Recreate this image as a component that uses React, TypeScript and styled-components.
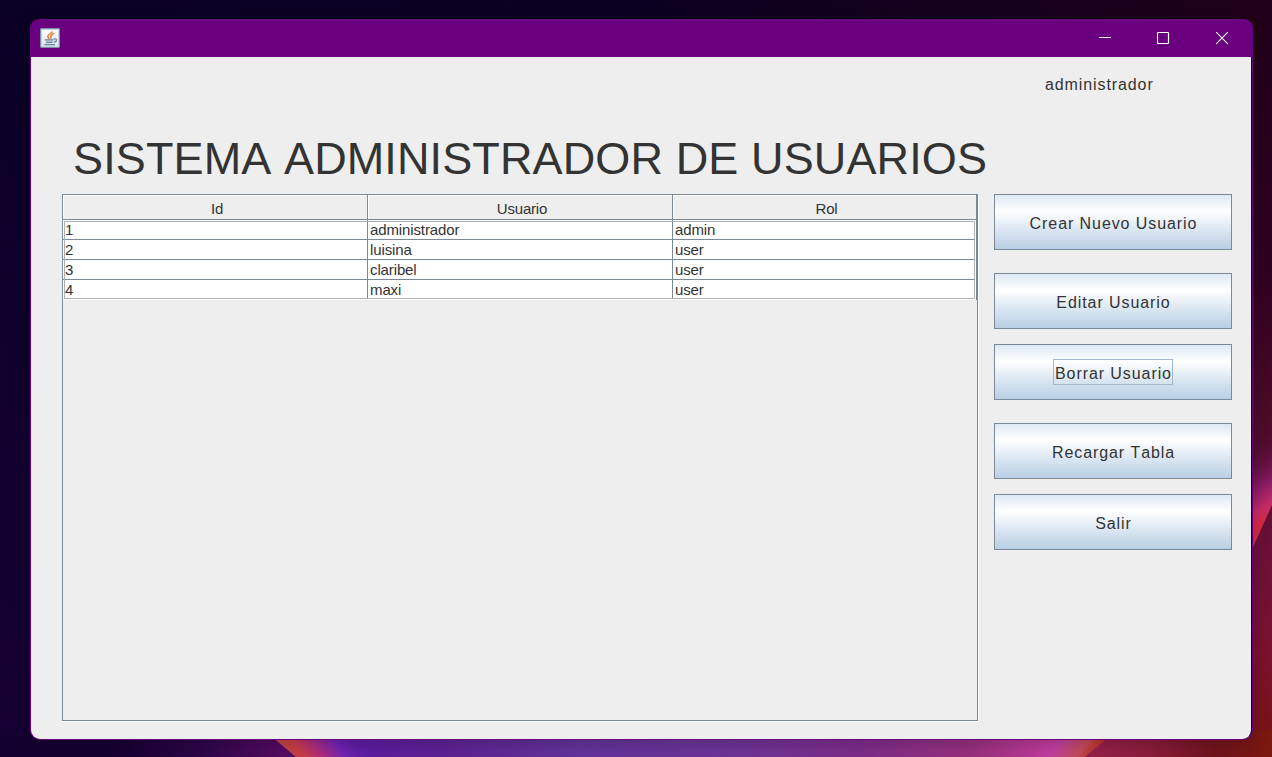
import React from "react";
import styled, { createGlobalStyle } from "styled-components";

const line = "#7a8a99";

const GlobalStyle = createGlobalStyle`
  html, body { margin: 0; padding: 0; overflow: hidden; }
  *, *::before, *::after { box-sizing: border-box; }
`;

const Desktop = styled.main`
  position: relative;
  width: 1272px;
  height: 757px;
  padding: 19px 19px 17px 30px;
  overflow: hidden;
  background: #0d0026;
  font-family: "Liberation Sans", Arial, sans-serif;
  font-kerning: none;
  color: #333;
`;

const Wallpaper = styled.svg`
  position: absolute;
  inset: 0;
`;

const Window = styled.section`
  position: relative;
  display: flex;
  flex-direction: column;
  height: 721px;
  padding: 0 1px 1px 1px;
  border-radius: 9px 9px 10px 10px;
  background: #6a007f;
  box-shadow: 0 3px 18px rgba(0, 0, 0, 0.2);
`;

const TitleBar = styled.header`
  display: flex;
  align-items: center;
  justify-content: space-between;
  height: 38px;
  padding: 0 23px 0 9px;
`;

const Controls = styled.div`
  display: flex;
  align-items: center;
  gap: 44px;
`;

const ControlIcon = styled.svg`
  display: block;
  width: 14px;
  height: 14px;
  fill: none;
  stroke: #fff;
`;

const Content = styled.div`
  flex: 1;
  display: flex;
  flex-direction: column;
  padding: 18px 19px 0 31px;
  background: #eee;
  border-right: 1px solid #08000c;
  border-radius: 0 0 9px 9px;
`;

const SessionUser = styled.div`
  align-self: flex-end;
  width: 187px;
  height: 20px;
  font-size: 16px;
  line-height: 20px;
  letter-spacing: 0.9px;
`;

const Heading = styled.h1`
  margin: 37px 0 9px 11px;
  height: 53px;
  font-size: 45px;
  font-weight: 400;
  line-height: 53px;
  letter-spacing: 0.12px;
  white-space: nowrap;
`;

const Workspace = styled.div`
  display: flex;
  gap: 16px;
`;

const ScrollPane = styled.div`
  width: 916px;
  height: 527px;
  border: 1px solid ${line};
  box-shadow: 1px 1px 0 #fff;
`;

const TableArea = styled.div`
  width: 914px;
  border-right: 1px solid ${line};
  font-size: 15px;
  letter-spacing: -0.12px;
`;

const Row = styled.div`
  display: grid;
  grid-template-columns: 305px 305px 1fr;
`;

const HeaderCell = styled.div`
  height: 25px;
  padding: 1px 0 0 4px;
  border-right: 1px solid ${line};
  border-bottom: 1px solid ${line};
  box-shadow: inset 1px 1px 0 #fff;
  line-height: 25px;
  letter-spacing: -0.2px;
  text-align: center;
  &:last-child { border-right: 0; }
`;

const Body = styled.div`
  position: relative;
  height: 80px;
  padding-right: 1px;
  background: #fff;
  &::after {
    content: "";
    position: absolute;
    inset: 1px 1px 1px 1px;
    border: 1px solid #b0b0b0;
  }
`;

const Cell = styled.div<{ $last: boolean }>`
  height: ${({ $last }) => ($last ? 19 : 20)}px;
  padding-left: 2px;
  border-right: 1px solid ${line};
  border-bottom: ${({ $last }) => ($last ? 0 : 1)}px solid ${line};
  line-height: 20px;
  &:last-child { border-right: 0; }
`;

const Actions = styled.nav`
  display: flex;
  flex-direction: column;
  width: 238px;
`;

const ActionButton = styled.button<{ $gap: number }>`
  display: flex;
  align-items: center;
  justify-content: center;
  height: 56px;
  margin: 0 0 ${({ $gap }) => $gap}px;
  padding: 0;
  border: 1px solid ${line};
  background: linear-gradient(#dde8f3 0%, #fff 30%, #dde8f3 62%, #b8cfe5 100%);
  color: #333;
  font: 16px/24px "Liberation Sans", Arial, sans-serif;
  font-kerning: none;
  letter-spacing: 0.92px;
`;

const ButtonLabel = styled.span<{ $focused?: boolean }>`
  height: 26px;
  padding: 2px 0 0 1px;
  border: 1px solid ${({ $focused }) => ($focused ? "#a3b8cc" : "transparent")};
`;

const users = [
  ["1", "administrador", "admin"],
  ["2", "luisina", "user"],
  ["3", "claribel", "user"],
  ["4", "maxi", "user"],
];

const actions = [
  { label: "Crear Nuevo Usuario", gap: 23 },
  { label: "Editar Usuario", gap: 15 },
  { label: "Borrar Usuario", gap: 23, focused: true },
  { label: "Recargar Tabla", gap: 15 },
  { label: "Salir", gap: 0 },
];

function Background() {
  return (
    <Wallpaper width="1272" height="757" viewBox="0 0 1272 757">
      <defs>
        <linearGradient id="top" x1="0" x2="1" y1="0" y2="0">
          <stop offset="0" stopColor="#0b0026" />
          <stop offset=".5" stopColor="#0c0022" />
          <stop offset=".85" stopColor="#18001c" />
          <stop offset="1" stopColor="#200018" />
        </linearGradient>
        <linearGradient id="left" x1="0" x2="0" y1="0" y2="1">
          <stop offset="0" stopColor="#0b0026" />
          <stop offset="1" stopColor="#160033" />
        </linearGradient>
        <linearGradient id="right" x1="0" x2="0" y1="0" y2="1">
          <stop offset="0" stopColor="#200018" />
          <stop offset=".35" stopColor="#2e0020" />
          <stop offset=".53" stopColor="#480a25" />
          <stop offset=".72" stopColor="#6b1038" />
          <stop offset=".86" stopColor="#7b1230" />
          <stop offset="1" stopColor="#781410" />
        </linearGradient>
        <linearGradient id="flare" gradientUnits="userSpaceOnUse" x1="1228" y1="453" x2="1264" y2="520">
          <stop offset="0" stopColor="#480a35" stopOpacity="0" />
          <stop offset=".6" stopColor="#8a1c64" />
          <stop offset=".85" stopColor="#c42c68" />
          <stop offset="1" stopColor="#d52a48" />
        </linearGradient>
        <linearGradient id="bottom" gradientUnits="userSpaceOnUse" x1="0" y1="0" x2="1272" y2="0">
          <stop offset="0" stopColor="#14002f" />
          <stop offset=".09" stopColor="#15002f" />
          <stop offset=".16" stopColor="#2d0648" />
          <stop offset=".225" stopColor="#560b62" />
          <stop offset="1" stopColor="#560b62" />
        </linearGradient>
        <linearGradient id="glow" gradientUnits="userSpaceOnUse" x1="276" y1="748" x2="1105" y2="748">
          <stop offset=".1" stopColor="#5b1ca0" />
          <stop offset=".2" stopColor="#5c2193" />
          <stop offset=".36" stopColor="#62329a" />
          <stop offset=".55" stopColor="#6c3496" />
          <stop offset=".71" stopColor="#7c2c88" />
          <stop offset=".84" stopColor="#982f7c" />
          <stop offset=".93" stopColor="#bd3a99" />
        </linearGradient>
        <linearGradient id="leftEdge" gradientUnits="userSpaceOnUse" x1="281" y1="750" x2="338" y2="705">
          <stop offset="0" stopColor="#c94440" />
          <stop offset=".22" stopColor="#c43b48" />
          <stop offset=".36" stopColor="#b42c72" />
          <stop offset=".65" stopColor="#7024b4" />
          <stop offset="1" stopColor="#5b1ca0" stopOpacity="0" />
        </linearGradient>
        <linearGradient id="rightEdge" gradientUnits="userSpaceOnUse" x1="1055" y1="724" x2="1094" y2="752">
          <stop offset="0" stopColor="#bd3a99" stopOpacity="0" />
          <stop offset=".3" stopColor="#c03fa0" />
          <stop offset=".75" stopColor="#c14a58" />
          <stop offset="1" stopColor="#bd3029" />
        </linearGradient>
        <linearGradient id="ember" gradientUnits="userSpaceOnUse" x1="1080" y1="0" x2="1272" y2="0">
          <stop offset="0" stopColor="#96214d" />
          <stop offset=".35" stopColor="#8a1c3c" />
          <stop offset=".7" stopColor="#70131b" />
          <stop offset="1" stopColor="#7b1810" />
        </linearGradient>
      </defs>
      <rect width="1272" height="30" fill="url(#top)" />
      <rect width="40" height="757" fill="url(#left)" />
      <rect x="1240" width="32" height="757" fill="url(#right)" />
      <path d="M1240 420L1272 400V505L1253 547H1240Z" fill="url(#flare)" />
      <rect y="730" width="1272" height="27" fill="url(#bottom)" />
      <path d="M264 730H1118L1085 757H296Z" fill="url(#glow)" />
      <path d="M264 730H400V757H296Z" fill="url(#leftEdge)" />
      <path d="M1000 730H1118L1085 757H1000Z" fill="url(#rightEdge)" />
      <path d="M1118 730H1272V757H1085Z" fill="url(#ember)" />
    </Wallpaper>
  );
}

function JavaIcon() {
  return (
    <svg width="20" height="20" viewBox="0 0 20 20" fill="none">
      <defs>
        <linearGradient id="tile" x1="0" y1="0" x2="0" y2="1">
          <stop stopColor="#fff" />
          <stop offset="1" stopColor="#d9e2e7" />
        </linearGradient>
      </defs>
      <rect x=".5" y=".5" width="19" height="19" rx=".8" fill="url(#tile)" stroke="#7993a4" />
      <path d="M1.5 18.5V1.5H18.5V18.5Z" stroke="#c5d3da" />
      <path d="M12.2 3.4C12.2 5.2 7.8 6.2 7.8 8.6C7.8 9.7 8.8 10 9.2 10.9M13.5 4.9C13.3 6.7 10.6 7 10.7 8.8C10.7 9.6 11.2 10 10.6 10.9" stroke="#e98b45" strokeWidth="1.7" />
      <path d="M4.8 11.9H13.5M6 14.4H12.6M13.8 11C17.4 10 17.4 13.9 13.8 14.2M4.3 16.7H15" stroke="#6686a1" strokeWidth="1.3" />
      <path d="M5.5 13H13" stroke="#91a8b9" />
    </svg>
  );
}

export default function App() {
  return (
    <Desktop>
      <GlobalStyle />
      <Background />
      <Window>
        <TitleBar>
          <JavaIcon />
          <Controls>
            <ControlIcon viewBox="0 0 14 14"><path d="M0 6.5H12" /></ControlIcon>
            <ControlIcon viewBox="0 0 14 14"><rect x=".5" y="1.5" width="11" height="11" rx=".7" strokeWidth="1.2" /></ControlIcon>
            <ControlIcon viewBox="0 0 14 14"><path d="M1.2 1.2L12.8 12.8M12.8 1.2L1.2 12.8" strokeWidth="1.1" /></ControlIcon>
          </Controls>
        </TitleBar>
        <Content>
          <SessionUser>administrador</SessionUser>
          <Heading>SISTEMA ADMINISTRADOR DE USUARIOS</Heading>
          <Workspace>
            <ScrollPane>
              <TableArea>
                <Row>
                  {["Id", "Usuario", "Rol"].map((name) => <HeaderCell key={name}>{name}</HeaderCell>)}
                </Row>
                <Body>
                  {users.map((user, index) => (
                    <Row key={user[0]}>
                      {user.map((value, column) => (
                        <Cell key={column} $last={index === users.length - 1}>{value}</Cell>
                      ))}
                    </Row>
                  ))}
                </Body>
              </TableArea>
            </ScrollPane>
            <Actions>
              {actions.map(({ label, gap, focused }) => (
                <ActionButton key={label} $gap={gap}>
                  <ButtonLabel $focused={focused}>{label}</ButtonLabel>
                </ActionButton>
              ))}
            </Actions>
          </Workspace>
        </Content>
      </Window>
    </Desktop>
  );
}
